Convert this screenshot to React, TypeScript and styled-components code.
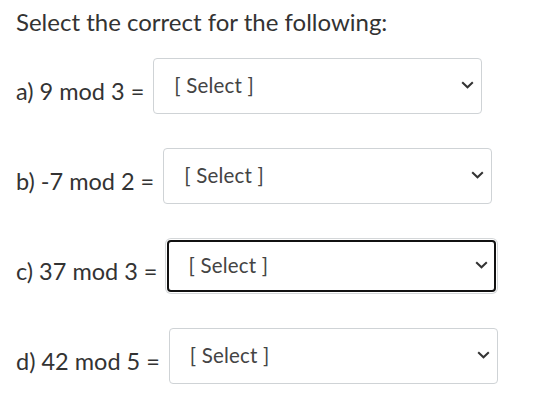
import React from 'react';
import styled, { createGlobalStyle } from 'styled-components';

const GlobalStyle = createGlobalStyle`
  body {
    margin: 0;
    background: #fff;
    font-family: Lato, "Noto Sans", sans-serif;
    color: #333;
  }
`

const Page = styled.div`
  padding: 5px 16px 0 16px;
`

const Title = styled.div`
  font-size: 24px;
  line-height: 34px;
  color: #333;
  margin-bottom: 19px;
`

const Row = styled.div`
  display: flex;
  align-items: center;
  gap: 9px;
  margin-bottom: 34px;
`

const Label = styled.span`
  font-size: 23.5px;
  padding-top: 10px;
  white-space: nowrap;
`

const SelectWrap = styled.div`
  position: relative;
  width: 329px;
`

const StyledSelect = styled.select<{ $focused?: boolean }>`
  appearance: none;
  display: block;
  width: 100%;
  height: ${({ $focused }) => ($focused ? '52px' : '56px')};
  margin: ${({ $focused }) => ($focused ? '2px 0' : '0')};
  box-sizing: border-box;
  padding: 0 30px 3px 20px;
  font-family: Lato, "Noto Sans", sans-serif;
  font-size: 20.5px;
  letter-spacing: 0.2px;
  color: #444;
  background: #fff;
  border: ${({ $focused }) => ($focused ? '2px solid #111' : '1px solid #cfd3d6')};
  border-radius: 4px;
  box-shadow: ${({ $focused }) => ($focused ? '0 0 0 1px #fff, 0 0 0 2px #d4d7d9' : 'none')};
  outline: none;
`

const Chevron = styled.svg`
  position: absolute;
  right: 8px;
  top: 50%;
  margin-top: -5px;
  width: 13px;
  height: 8px;
  pointer-events: none;
`

interface IProps {
    label: string;
    focused?: boolean;
}

const Question = ({ label, focused = false }: IProps) => (
    <Row>
        <Label>{label}</Label>
        <SelectWrap>
            <StyledSelect $focused={focused} defaultValue="">
                <option value="">[ Select ]</option>
            </StyledSelect>
            <Chevron viewBox="0 0 13 8">
                <path d="M1.2 1.2 L6.5 6.3 L11.8 1.2" fill="none" stroke="#333" strokeWidth="2" />
            </Chevron>
        </SelectWrap>
    </Row>
);

const App = () => (
    <React.Fragment>
        <GlobalStyle />
        <Page>
            <Title>Select the correct for the following:</Title>
            <Question label="a) 9 mod 3 =" />
            <Question label="b) -7 mod 2 =" />
            <Question label="c) 37 mod 3 =" focused />
            <Question label="d) 42 mod 5 =" />
        </Page>
    </React.Fragment>
);

export default App;
